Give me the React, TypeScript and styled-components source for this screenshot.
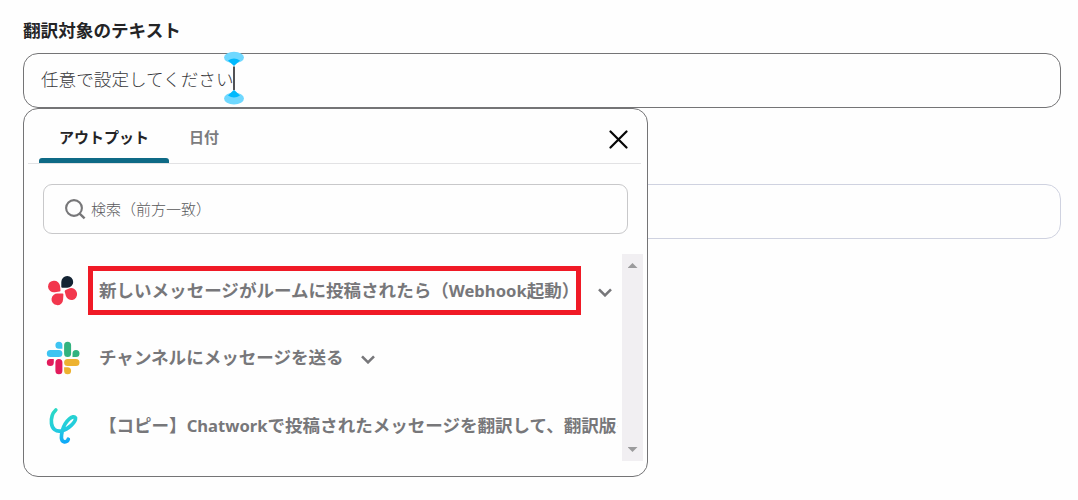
import { ReactNode } from "react";
import styled, { createGlobalStyle, css } from "styled-components";

interface IOutputRowProps {
  icon: ReactNode;
  label: ReactNode;
  highlighted?: boolean;
  expandable?: boolean;
}

const CloseIcon = () => (
  <svg width="19" height="19" viewBox="0 0 19 19" fill="none">
    <path
      d="M1.500 1.500 17.500 17.500M17.500 1.500 1.500 17.500"
      stroke="#050505"
      strokeWidth="2.200"
      strokeLinecap="round"
    />
  </svg>
);

const SearchIcon = () => (
  <svg width="21" height="21" viewBox="0 0 21 21" fill="none">
    <circle cx="9" cy="9" r="7.900" stroke="#777779" strokeWidth="2.100" />
    <path d="m14.600 14.600 5 4.800" stroke="#777779" strokeWidth="2.400" />
  </svg>
);

const ChevronIcon = () => (
  <svg width="14" height="9" viewBox="0 0 14 9" fill="none">
    <path d="m1 1.300 6 6 6-6" stroke="#77777a" strokeWidth="2.600" />
  </svg>
);

const ChatworkIcon = () => (
  <svg width="34" height="34" viewBox="0 0 34 34">
    <path
      d="M21.300 2a5.900 5.900 0 1 1 0 11.800h-5q-1 0-1-1V7.900A5.900 5.900 0 0 1 21.300 2Z"
      fill="#132333"
    />
    <path
      d="M8.200 6.700a5.800 5.800 0 0 1 5.800 5.100l.5 4.400q.1 1.200-1 1.400l-4.700.6A5.800 5.800 0 1 1 8.200 6.700Z"
      fill="#f2374d"
    />
    <path
      d="M12.200 19.600l4.300-.1q1 0 .9 1l-.3 5a5.800 5.800 0 1 1-4.900-5.900Z"
      fill="#f2374d"
    />
    <path
      d="M19.600 16l4.200-1.800a5.900 5.900 0 1 1 2.500 11.900c-3 .2-5.300-1.300-6.400-4l-1.200-4.500q-.2-1.100.9-1.600Z"
      fill="#f2374d"
    />
  </svg>
);

const SlackIcon = () => (
  <svg width="34" height="34" viewBox="0 0 34 34">
    <path
      d="M12.900.8a3.500 3.500 0 0 1 3.500 3.500v3.500h-3.500a3.500 3.500 0 0 1 0-7ZM4.300 9h8.600a3.500 3.500 0 0 1 0 7H4.300a3.500 3.500 0 0 1 0-7Z"
      fill="#3ec4f2"
    />
    <path
      d="M21.600.8a3.500 3.500 0 0 1 3.500 3.500v8.200a3.500 3.500 0 0 1-7 0V4.300A3.500 3.500 0 0 1 21.600.8ZM30 9a3.500 3.500 0 0 1 0 7h-3.500v-3.500A3.500 3.500 0 0 1 30 9Z"
      fill="#32b37f"
    />
    <path
      d="M21.600 17.900H30a3.500 3.500 0 0 1 0 7h-8.400a3.500 3.500 0 0 1 0-7Zm-3.500 8.400h3.500a3.500 3.500 0 1 1-3.500 3.500Z"
      fill="#edb230"
    />
    <path
      d="M4.300 17.900h3.500v3.500a3.500 3.500 0 1 1-3.500-3.500ZM12.900 17.900a3.500 3.500 0 0 1 3.500 3.500v8.400a3.500 3.500 0 0 1-7 0v-8.400a3.500 3.500 0 0 1 3.500-3.500Z"
      fill="#e21c5c"
    />
  </svg>
);

const YoomIcon = () => (
  <svg width="34" height="40" viewBox="0 0 34 40" fill="none">
    <defs>
      <linearGradient id="yoom" x1="12" y1="2" x2="20" y2="38" gradientUnits="userSpaceOnUse">
        <stop stopColor="#2bd9c4" />
        <stop offset=".6" stopColor="#22cbe0" />
        <stop offset="1" stopColor="#0ca4fb" />
      </linearGradient>
    </defs>
    <path
      d="M9.800 4C6 7.500 5 13 5.500 17.500 6.200 23 10 25.900 15 25 22.500 23.500 30 16 29.500 11.800 27.500 8.300 19.500 14 16.500 24c-1.500 6-2 11.300 1.800 11.800 2.500.2 3.600-.8 4-2.600"
      stroke="url(#yoom)"
      strokeWidth="3.700"
      strokeLinecap="round"
      strokeLinejoin="round"
    />
  </svg>
);

const TextCursor = () => (
  <CursorSvg width="22" height="56" viewBox="0 0 22 56">
    <ellipse cx="11" cy="7.500" rx="10" ry="5.700" fill="#6fd8ff" />
    <path d="M5 10.500q6-4 12 0l-6 5.500Z" fill="#00b9fd" />
    <path d="M11 16.500v23.500" stroke="#3f3f42" strokeWidth="1.800" />
    <ellipse cx="11" cy="48.500" rx="10" ry="6" fill="#6fd8ff" />
    <path d="M5 45.500q6 4 12 0l-6-5.800Z" fill="#00b9fd" />
  </CursorSvg>
);

const OutputRow = ({
  icon,
  label,
  highlighted,
  expandable,
}: IOutputRowProps) => (
  <Row>
    <RowIcon>{icon}</RowIcon>
    <RowLabel $highlighted={highlighted}>{label}</RowLabel>
    {expandable && (
      <Chevron $wide={highlighted}>
        <ChevronIcon />
      </Chevron>
    )}
  </Row>
);

const App = () => {
  return (
    <>
      <GlobalStyle />
      <Page>
        <FieldLabel>翻訳対象のテキスト</FieldLabel>
        <Field>
          <TextBox $active>
            任意で設定してください
            <TextCursor />
          </TextBox>
          <Popup>
            <TabBar>
              <Tab $selected>アウトプット</Tab>
              <Tab>日付</Tab>
              <CloseButton>
                <CloseIcon />
              </CloseButton>
            </TabBar>
            <SearchBox>
              <SearchIcon />
              <span>検索（前方一致）</span>
            </SearchBox>
            <ListArea>
              <List>
                <OutputRow
                  icon={<ChatworkIcon />}
                  label={
                    <>
                      新しいメッセージがルームに投稿されたら（<Latin>Webhook</Latin>
                      起動）
                    </>
                  }
                  highlighted
                  expandable
                />
                <OutputRow
                  icon={<SlackIcon />}
                  label="チャンネルにメッセージを送る"
                  expandable
                />
                <OutputRow
                  icon={<YoomIcon />}
                  label={
                    <>
                      【コピー】<Latin>Chatwork</Latin>
                      で投稿されたメッセージを翻訳して、翻訳版を
                    </>
                  }
                />
              </List>
              <ScrollBar>
                <ScrollArrow $up />
                <ScrollArrow />
              </ScrollBar>
            </ListArea>
          </Popup>
        </Field>
        <TextBox />
      </Page>
    </>
  );
};

export default App;

//styled

const GlobalStyle = createGlobalStyle`
  * {
    box-sizing: border-box;
  }
  body {
    margin: 0;
    background: #fefefe;
    font-family: "Noto Sans CJK JP", sans-serif;
    overflow: hidden;
  }
  svg {
    display: block;
    flex: none;
  }
`;

const Page = styled.div`
  height: 500px;
  padding: 17px 17px 0 23px;
`;

const FieldLabel = styled.div`
  height: 36px;
  font-size: 17.6px;
  font-weight: 700;
  line-height: 26px;
  color: #242426;
`;

const Field = styled.div`
  position: relative;
  margin-bottom: 76px;
`;

const TextBox = styled.div<{ $active?: boolean }>`
  display: flex;
  align-items: center;
  height: 55px;
  padding: 0 17px 5px;
  border: 1px solid ${({ $active }) => ($active ? "#747476" : "#cfd2e0")};
  border-radius: 15px;
  font-size: 17.6px;
  font-weight: 300;
  color: #38383b;
`;

const CursorSvg = styled.svg`
  margin-left: -10.5px;
`;

const Popup = styled.div`
  position: absolute;
  top: 55px;
  left: 0;
  display: flex;
  flex-direction: column;
  width: 625px;
  height: 369px;
  border: 1px solid #747476;
  border-radius: 15px;
  background: #fefefe;
`;

const TabBar = styled.div`
  display: flex;
  height: 55px;
  margin: 0 6px 0 4px;
  padding-left: 11px;
  border-bottom: 1px solid #e2e2e4;
`;

const Tab = styled.div<{ $selected?: boolean }>`
  display: flex;
  flex-direction: column;
  justify-content: space-between;
  width: 70px;
  height: 54px;
  padding-top: 17px;
  font-size: 15px;
  font-weight: 700;
  line-height: 22px;
  text-align: center;
  color: #7c7c7e;

  ${({ $selected }) =>
    $selected &&
    css`
      width: 130px;
      color: #242426;

      &::after {
        content: "";
        height: 5px;
        border-radius: 3px 3px 0 0;
        background: #0e6a86;
      }
    `}
`;

const CloseButton = styled.div`
  margin: 21px 13px 0 auto;
`;

const SearchBox = styled.div`
  display: flex;
  align-items: center;
  gap: 5px;
  width: 585px;
  height: 50px;
  margin: 20px 0 20px 19px;
  padding-left: 21px;
  border: 1px solid #c8c8ca;
  border-radius: 9px;
  font-size: 15px;
  font-weight: 300;
  line-height: 20px;
  color: #58585a;
`;

const ListArea = styled.div`
  display: flex;
  justify-content: space-between;
  height: 207px;
  margin: 0 4px 0 21px;
`;

const List = styled.div`
  display: flex;
  flex-direction: column;
  gap: 18px;
  width: 573px;
  padding-top: 12px;
  overflow: hidden;
`;

const Row = styled.div`
  display: flex;
  align-items: center;
  height: 49px;
  flex: none;

  &:last-child {
    margin-top: 1px;
  }
`;

const RowIcon = styled.div`
  width: 34px;
  margin-left: 1px;
  margin-right: 8px;
  flex: none;
`;

const RowLabel = styled.div<{ $highlighted?: boolean }>`
  width: ${({ $highlighted }) => ($highlighted ? "493px" : "auto")};
  height: 49px;
  padding-left: 6px;
  border: 5px solid
    ${({ $highlighted }) => ($highlighted ? "#f01a26" : "transparent")};
  font-size: 17.55px;
  font-weight: 700;
  line-height: 38px;
  color: #77777a;
  white-space: nowrap;
  flex: none;
`;

const Latin = styled.span`
  font-family: "Noto Sans", sans-serif;
  font-size: 16.6px;
`;

const Chevron = styled.div<{ $wide?: boolean }>`
  margin: 4px 0 0 ${({ $wide }) => ($wide ? 17 : 12)}px;
`;

const ScrollBar = styled.div`
  display: flex;
  flex-direction: column;
  align-items: center;
  justify-content: space-between;
  width: 21px;
  padding: 9px 0;
  background: #f1eff2;
`;

const ScrollArrow = styled.div<{ $up?: boolean }>`
  width: 10px;
  height: 5px;
  background: #9b9b9d;
  clip-path: ${({ $up }) =>
    $up ? "polygon(50% 0, 100% 100%, 0 100%)" : "polygon(0 0, 100% 0, 50% 100%)"};
`;
